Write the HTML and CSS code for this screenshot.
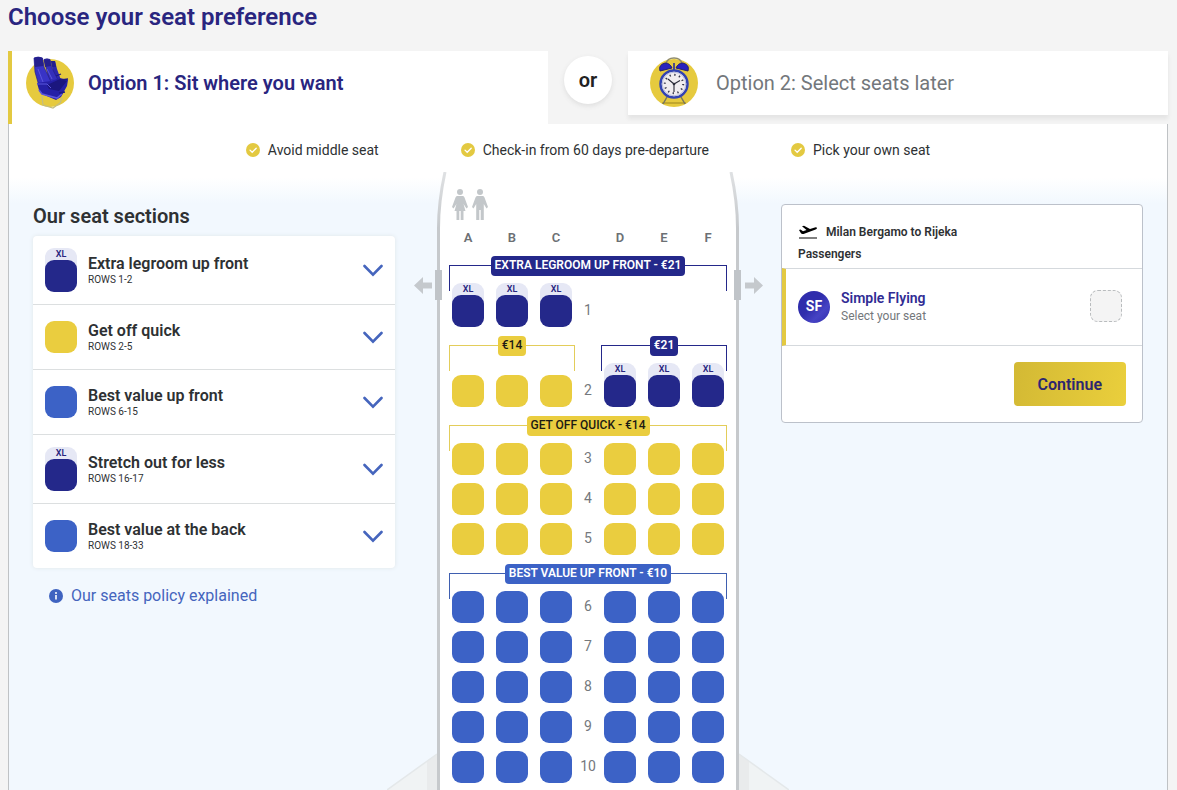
FILE: index.html
```
<!DOCTYPE html>
<html lang="en">
<head>
<meta charset="utf-8">
<meta name="viewport" content="width=device-width, initial-scale=1">
<title>Choose your seat preference</title>
<link rel="stylesheet" href="styles.css">
</head>
<body>
<svg class="defs" aria-hidden="true">
  <symbol id="chevron" viewBox="0 0 20 14"><path d="M1.500 2 10 10.700 18.500 2" fill="none" stroke="currentColor" stroke-width="2.600" stroke-linecap="round"/></symbol>
  <symbol id="tick" viewBox="0 0 14 14"><circle cx="7" cy="7" r="7" fill="#e3c941"/><path d="M4 7.100 6.200 9.300 10.200 5.200" fill="none" stroke="#fff" stroke-width="1.300" stroke-linecap="round"/></symbol>
  <symbol id="arrow" viewBox="0 0 18 17"><path d="M0 8.500 9 0V5.500H18V11.500H9V17Z" fill="#c5c9cd"/></symbol>
</svg>

<h1 class="page-title">Choose your seat preference</h1>

<main>
  <div class="options">
    <button class="option option--active" type="button">
      <svg class="option__art" viewBox="0 0 50 54" aria-hidden="true">
        <circle cx="25" cy="27" r="24" fill="#e6ca3e"/>
        <path d="M17 40 18 49 28 52 35 47 37 42" fill="none" stroke="#c2bd83" stroke-width="1.200"/>
        <path d="M26 5 30 5 32 13 36 24 30 27Z" fill="#2d27ac"/>
        <path d="M19 3.500Q22 2 25 3.500L27 12 33 24 25 27Z" fill="#342fbb" stroke="#241f86" stroke-width=".7"/>
        <path d="M9 2Q13 0 17.500 2L19 11 27 28 14 30 10 16Z" fill="#3833c6" stroke="#231e8b" stroke-width=".7"/>
        <path d="M9 2Q13 0 17.500 2L18.500 10 10 11ZM19 3.500 25 3.500 26 10 20 11ZM26 5 30 5 31 11 27.500 11Z" fill="#241f8d"/>
        <path d="M12 27 26 25 35 22 43 24 42 30 36 41 31 44 17 38 14 34Z" fill="#2520a6"/>
        <path d="M22 29 35 23 42 25 34 35 24 33Z" fill="#1b167e"/>
        <path d="M14 34 17 38 32 42 37 38" fill="none" stroke="#5b56dd" stroke-width="1.600"/>
        <path d="M12 28 22 28 26 32M13 13 18 26M22 13 27 23" fill="none" stroke="#5b56dd" stroke-width="1"/>
        <path d="M31 20 36 18M36 24 43 23M34 37 40 36" stroke="#1e1884" stroke-width="1.300"/>
      </svg>
      <span>Option 1: Sit where you want</span>
    </button>
    <span class="or">or</span>
    <button class="option option--later" type="button">
      <svg class="option__art" viewBox="0 0 50 54" aria-hidden="true">
        <circle cx="25" cy="27" r="24" fill="#e6ca3e"/>
        <path d="M13 47H37" stroke="#b59b28" stroke-width="1.500"/>
        <path d="M18 41 14 48M32 41 36 48" stroke="#77765e" stroke-width="1.500"/>
        <path d="M17 8Q18 2 25 2T33 8" fill="none" stroke="#8f8a68" stroke-width="1.500"/>
        <path d="M11 15Q9 9 16 7Q21 7 23 12ZM39 15Q41 9 34 7Q29 7 27 12Z" fill="#2922be" stroke="#24206f"/>
        <path d="M25 7V14" stroke="#4d4c87" stroke-width="2"/>
        <circle cx="25" cy="28" r="13.500" fill="#f1edf0" stroke="#3343b2" stroke-width="2.500"/>
        <circle cx="25" cy="28" r="11.800" fill="none" stroke="#b9bddb"/>
        <circle cx="25" cy="28" r="9.200" fill="none" stroke="#34344a" stroke-width="2" stroke-dasharray="1.300 3.517"/>
        <path d="M19 23 25 28 31 24.500M25 28V36" fill="none" stroke="#2b2b38" stroke-width="1.100"/>
        <circle cx="25" cy="28" r="1.300" fill="#2b2b38"/>
      </svg>
      <span>Option 2: Select seats later</span>
    </button>
  </div>

  <section class="panel">
    <ul class="benefits">
      <li><svg><use href="#tick"/></svg>Avoid middle seat</li>
      <li><svg><use href="#tick"/></svg>Check-in from 60 days pre-departure</li>
      <li><svg><use href="#tick"/></svg>Pick your own seat</li>
    </ul>

    <div class="columns">
      <aside class="side">
        <h2 class="side__title">Our seat sections</h2>
        <div class="sections">
          <button class="section" type="button">
            <span class="seat seat--navy seat--xl">XL</span>
            <span class="section__text"><span class="section__name">Extra legroom up front</span><span class="section__rows">ROWS 1-2</span></span>
            <svg class="chevron"><use href="#chevron"/></svg>
          </button>
          <button class="section" type="button">
            <span class="seat seat--yellow"></span>
            <span class="section__text"><span class="section__name">Get off quick</span><span class="section__rows">ROWS 2-5</span></span>
            <svg class="chevron"><use href="#chevron"/></svg>
          </button>
          <button class="section" type="button">
            <span class="seat seat--blue"></span>
            <span class="section__text"><span class="section__name">Best value up front</span><span class="section__rows">ROWS 6-15</span></span>
            <svg class="chevron"><use href="#chevron"/></svg>
          </button>
          <button class="section" type="button">
            <span class="seat seat--navy seat--xl">XL</span>
            <span class="section__text"><span class="section__name">Stretch out for less</span><span class="section__rows">ROWS 16-17</span></span>
            <svg class="chevron"><use href="#chevron"/></svg>
          </button>
          <button class="section" type="button">
            <span class="seat seat--blue"></span>
            <span class="section__text"><span class="section__name">Best value at the back</span><span class="section__rows">ROWS 18-33</span></span>
            <svg class="chevron"><use href="#chevron"/></svg>
          </button>
        </div>
        <a class="policy" href="#policy">
          <svg viewBox="0 0 14 14" aria-hidden="true"><circle cx="7" cy="7" r="7" fill="#3f63c0"/><circle cx="7" cy="4" r="1" fill="#fff"/><path d="M7 6V10.500" stroke="#fff" stroke-width="1.600"/></svg>
          Our seats policy explained
        </a>
      </aside>

      <div class="plane">
        <svg class="wings" viewBox="0 0 402 38" aria-hidden="true">
          <path d="M50 2 0 38H402L352 2Z" fill="#f0f3f4"/>
          <path d="M40 9 50 2V38H40ZM362 9 352 2V38H362Z" fill="#e9ebec"/>
          <path d="M50 2 0 38M352 2 402 38" stroke="#e4e8ea" stroke-width="1.500" fill="none"/>
        </svg>
        <div class="nose">
          <svg class="nose__wall" viewBox="0 0 302 56" preserveAspectRatio="none" aria-hidden="true">
            <defs><linearGradient id="wall" x1="0" y1="0" x2="0" y2="56" gradientUnits="userSpaceOnUse"><stop offset="0" stop-color="#dfe1e3"/><stop offset="1" stop-color="#c6c9cc"/></linearGradient></defs>
            <path d="M8 0Q1.500 30 1.500 56H300.500Q300.500 30 294 0Z" fill="#fff"/>
            <path d="M8 0Q1.500 30 1.500 56M294 0Q300.500 30 300.500 56" fill="none" stroke="url(#wall)" stroke-width="3"/>
          </svg>
          <svg class="toilets" viewBox="0 0 36 32" role="img" aria-label="Toilets">
            <g fill="#c3c7ca">
              <circle cx="8" cy="3" r="3"/>
              <path d="M5 7H11Q12 7 12.500 8.500L16 18 14.500 19.500 11.500 15 13.500 22H11.500V31H8.700V22H7.300V31H4.500V22H2.500L4.500 15 1.500 19.500 0 18 3.500 8.500Q4 7 5 7Z"/>
              <circle cx="28" cy="3" r="3"/>
              <path d="M25 7H31Q32 7 32.500 8.500L36 18 34.500 19.500 31.800 15V31H28.700V21H27.300V31H24.200V15L21.500 19.500 20 18 23.500 8.500Q24 7 25 7Z"/>
            </g>
          </svg>
        </div>
        <div class="cabin">
          <div class="letters row">
            <div class="trio"><span>A</span><span>B</span><span>C</span></div>
            <div class="trio"><span>D</span><span>E</span><span>F</span></div>
          </div>
          <div id="seatmap"></div>
          <span class="door door--left"></span>
          <span class="door door--right"></span>
          <svg class="exit exit--left"><use href="#arrow"/></svg>
          <svg class="exit exit--right"><use href="#arrow"/></svg>
        </div>
      </div>

      <aside class="side">
        <div class="summary">
          <div class="summary__head">
            <p class="route">
              <svg viewBox="0 0 20 14" aria-hidden="true"><path d="M1 12.500H19V13.500H1Z"/><path d="M1 5 2.500 4.600 5 6.200 8.500 5.100 4 1.300 6 .8 12 4.100 16 2.700Q18.700 1.900 19 3 19.100 4 17 4.800L5.500 8.900Q3.600 9.300 2.800 8.100Z"/></svg>
              Milan Bergamo to Rijeka
            </p>
            <p>Passengers</p>
          </div>
          <div class="passenger">
            <span class="avatar">SF</span>
            <p class="passenger__text"><span class="passenger__name">Simple Flying</span><span class="passenger__hint">Select your seat</span></p>
            <span class="placeholder"></span>
          </div>
          <div class="summary__foot"><button class="continue" type="button">Continue</button></div>
        </div>
      </aside>
    </div>
  </section>
</main>
<script src="seatmap.js"></script>
</body>
</html>
```
FILE: styles.css
```
* { box-sizing: border-box; }

body {
  margin: 0;
  padding: 0 9px 0 8px;
  background: #f4f4f4;
  color: #2e3133;
  font-family: Roboto, "Liberation Sans", sans-serif;
  font-size: 14px;
}

h1, h2, p, ul { margin: 0; padding: 0; }
button { font: inherit; color: inherit; border: 0; padding: 0; background: none; cursor: pointer; }
svg { display: block; flex: none; }
.defs { position: absolute; width: 0; height: 0; }

.page-title {
  padding: 2px 0 19px;
  color: #29257f;
  font-size: 24px;
  font-weight: 600;
  line-height: 30px;
}

/* Option tabs */
.options {
  display: grid;
  grid-template-columns: 1fr 80px 1fr;
  align-items: start;
  justify-items: stretch;
}
.option {
  display: flex;
  align-items: center;
  gap: 13px;
  height: 64px;
  background: #fff;
  font-size: 20px;
  text-align: left;
}
.option--active {
  height: 73px;
  padding: 0 0 9px 13px;
  border-left: 4px solid #e3c941;
  color: #29257f;
  font-weight: 600;
}
.option--later {
  gap: 17px;
  padding-left: 21px;
  box-shadow: 0 4px 4px #e4e4e4;
  color: #73777b;
}
.option__art { width: 50px; height: 54px; }
.or {
  width: 48px;
  height: 48px;
  margin: 5px 16px 0;
  border-radius: 50%;
  background: #fff;
  box-shadow: 0 2px 5px #dedede;
  color: #222;
  font-size: 20px;
  font-weight: 600;
  line-height: 48px;
  text-align: center;
}

/* Main panel */
.panel {
  border: solid #bfc2c5;
  border-width: 0 1px;
  background: linear-gradient(#fff 54px, #f2f8fe 80px);
}
.benefits {
  display: flex;
  justify-content: center;
  gap: 82px;
  padding: 16px 0 12px;
  line-height: 20px;
  list-style: none;
}
.benefits li { display: flex; align-items: center; gap: 8px; }
.benefits svg { width: 14px; height: 14px; }

.columns {
  display: grid;
  grid-template-columns: minmax(0, 1fr) 302px minmax(0, 1fr);
  gap: 42px;
  padding: 0 24px;
}
.side { padding-top: 32px; }
.side__title {
  margin-bottom: 8px;
  font-size: 20px;
  font-weight: 600;
  line-height: 24px;
}

/* Seats */
.seat {
  display: block;
  flex: none;
  width: 32px;
  height: 32px;
  border-radius: 9px;
}
.seat--navy { background: #24288a; }
.seat--yellow { background: #eacd3f; }
.seat--blue { background: #3c62c6; }
.seat--xl {
  position: relative;
  z-index: 0;
  height: 44px;
  background: #e6e8f5;
  color: #29257f;
  font-size: 9px;
  font-weight: 600;
  line-height: 12px;
  text-align: center;
}
.seat--xl::after {
  content: "";
  display: block;
  height: 32px;
  border-radius: 9px;
  background: #24288a;
}

/* Section list */
.sections {
  border-radius: 4px;
  background: #fff;
  box-shadow: 0 0 4px #dfe6e9;
}
.section {
  display: flex;
  align-items: center;
  gap: 11px;
  width: 100%;
  min-height: 64px;
  padding: 12px;
  text-align: left;
}
.section + .section { border-top: 1px solid #dcdfe0; }
.section:nth-child(n + 2) { min-height: 65px; }
.section__text { flex: 1; padding-top: 1px; }
.section__name { display: block; font-size: 16px; font-weight: 600; line-height: 18px; }
.section__rows { display: block; font-size: 10px; line-height: 13px; }
.chevron { width: 20px; height: 14px; margin-top: 2px; color: #4565bd; }
.policy {
  display: flex;
  align-items: center;
  gap: 8px;
  margin-top: 18px;
  padding-left: 16px;
  color: #4565bd;
  font-size: 16px;
  line-height: 20px;
  text-decoration: none;
}
.policy svg { width: 14px; height: 14px; }

/* Plane */
.plane { position: relative; }
.wings { position: absolute; bottom: 0; left: -50px; width: 402px; height: 38px; }
.nose { position: relative; height: 56px; padding: 17px 15px 0; }
.nose__wall { position: absolute; inset: 0; width: 100%; height: 100%; }
.toilets { position: relative; width: 36px; height: 32px; }
.cabin {
  position: relative;
  padding: 0 12px 7px;
  border: solid #c6c9cc;
  border-width: 0 3px;
  background: #fff;
}
.row { display: flex; justify-content: space-between; align-items: flex-end; }
.trio { display: flex; gap: 12px; width: 120px; }
.letters { color: #6c7074; font-size: 13px; font-weight: 600; line-height: 19px; text-align: center; }
.letters span { width: 32px; }
.row__number { width: 32px; color: #75797d; line-height: 30px; height: 32px; text-align: center; }
.row + .row { margin-top: 8px; }

.bands { display: flex; justify-content: space-between; padding: 9px 0 7px; }
.band { position: relative; display: flex; justify-content: center; width: 120px; }
.band--wide { width: 100%; }
.band::before {
  content: "";
  position: absolute;
  top: 9px;
  left: -3px;
  right: -3px;
  height: 25px;
  border: 1px solid;
  border-bottom: 0;
}
.band__tag {
  position: relative;
  height: 20px;
  padding: 0 4px;
  border-radius: 4px;
  font-size: 12px;
  font-weight: 600;
  line-height: 18px;
}
.band--navy { color: #24288a; }
.band--navy .band__tag { background: #24288a; color: #fff; }
.band--yellow { color: #e3cd5a; }
.band--yellow .band__tag { background: #eacd3f; color: #1c1a14; font-weight: 500; }
.band--blue { color: #3f5fb0; }
.band--blue .band__tag { background: #3c62c6; color: #fff; }

.door { position: absolute; top: 42px; width: 7px; height: 30px; background: #c0c4c8; }
.door--left { left: -5px; }
.door--right { right: -5px; }
.exit { position: absolute; top: 49px; width: 18px; height: 17px; }
.exit--left { left: -26px; }
.exit--right { right: -27px; transform: rotate(180deg); }

/* Summary card */
.summary { border: 1px solid #bcc1ca; border-radius: 4px; background: #fff; }
.summary__head { padding: 16px 16px 3px; font-size: 12px; font-weight: 600; line-height: 22px; }
.route { display: flex; align-items: center; gap: 8px; }
.route svg { width: 20px; height: 14px; }
.passenger {
  display: flex;
  align-items: center;
  gap: 11px;
  min-height: 78px;
  padding: 0 20px 0 12px;
  border: solid #d5d9dd;
  border-width: 1px 0;
  border-left: 4px solid #e3c941;
}
.avatar {
  width: 32px;
  height: 32px;
  border-radius: 50%;
  background: linear-gradient(135deg, #2f2dac 45%, #4643c4 70%, #302dad);
  color: #fff;
  font-size: 14px;
  font-weight: 700;
  line-height: 31px;
  text-align: center;
}
.passenger__text { flex: 1; }
.passenger__name { display: block; color: #302c94; font-size: 14px; font-weight: 600; line-height: 18px; }
.passenger__hint { display: block; color: #73777b; font-size: 12px; line-height: 19px; }
.placeholder { width: 32px; height: 32px; margin-bottom: 3px; border: 1px dashed #b9bcbe; border-radius: 8px; background: #f4f4f4; }
.summary__foot { display: flex; justify-content: flex-end; padding: 16px; }
.continue {
  height: 44px;
  padding: 0 24px;
  border-radius: 4px;
  background: linear-gradient(100deg, #d3b934, #eacf3c);
  color: #2c2670;
  font-size: 16px;
  font-weight: 600;
}

@media (max-width: 1000px) {
  .columns { grid-template-columns: 302px; justify-content: center; }
  .benefits { gap: 16px; }
}
```
FILE: seatmap.js
```
const zones = [
  { bands: [["navy", "EXTRA LEGROOM UP FRONT - €21"]], rows: [1], left: "navy", right: null },
  { bands: [["yellow", "€14"], ["navy", "€21"]], rows: [2], left: "yellow", right: "navy" },
  { bands: [["yellow", "GET OFF QUICK - €14"]], rows: [3, 4, 5], left: "yellow", right: "yellow" },
  { bands: [["blue", "BEST VALUE UP FRONT - €10"]], rows: [6, 7, 8, 9, 10], left: "blue", right: "blue" }
];

function trio(row, letters, color) {
  if (!color) return '<div class="trio"></div>';
  const xl = color === "navy";
  const seats = [...letters].map(l =>
    `<button type="button" class="seat seat--${color}${xl ? " seat--xl" : ""}" aria-label="Seat ${row}${l}">${xl ? "XL" : ""}</button>`);
  return `<div class="trio">${seats.join("")}</div>`;
}

document.getElementById("seatmap").innerHTML = zones.map(zone => {
  const wide = zone.bands.length === 1 ? " band--wide" : "";
  const bands = zone.bands.map(([color, label]) =>
    `<div class="band band--${color}${wide}"><span class="band__tag">${label}</span></div>`);
  const rows = zone.rows.map(n =>
    `<div class="row">${trio(n, "ABC", zone.left)}<span class="row__number">${n}</span>${trio(n, "DEF", zone.right)}</div>`);
  return `<div class="bands">${bands.join("")}</div>${rows.join("")}`;
}).join("");
```
